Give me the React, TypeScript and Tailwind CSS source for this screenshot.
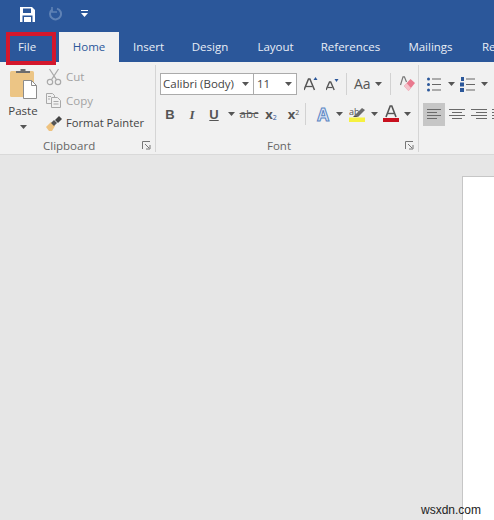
import React from "react";

const Caret = ({ c = "#555" }: { c?: string }) => (
  <svg width="7" height="4" viewBox="0 0 7 4" className="block"><path d="M0 0h7L3.5 4z" fill={c} /></svg>
);

const Launcher = () => (
  <svg width="9" height="9" viewBox="0 0 9 9" className="block">
    <path d="M.5 8V.5H8" fill="none" stroke="#777" />
    <path d="M3 3l4 4M8 4v4H4" fill="none" stroke="#777" />
  </svg>
);

const Tab = ({ label, active, w }: { label: string; active?: boolean; w: string }) => (
  <div className={`${w} h-full flex items-center justify-center shrink-0 ${active ? "bg-[#f1f1f1] text-[#2b579a]" : "text-[#e9eef6]"}`}>{label}</div>
);

const Cell = ({ w, children, className = "" }: { w: string; children?: React.ReactNode; className?: string }) => (
  <div className={`${w} h-full shrink-0 flex items-center justify-center ${className}`}>{children}</div>
);

const Sep = () => <div className="w-px h-[22px] bg-[#d2d2d2] shrink-0" />;

const Lines = ({ pts }: { pts: [number, number][] }) => (
  <svg width="16" height="14" viewBox="0 0 16 14" className="block">
    {pts.map(([a, b], i) => (
      <rect key={i} x={a} y={i * 3 + 1} width={b - a} height="1" fill="#6a6a6a" />
    ))}
  </svg>
);

export default function App() {
  return (
    <div className="relative w-[494px] h-[520px] overflow-hidden bg-[#e6e6e6] font-['Open_Sans','Noto_Sans',sans-serif] text-[11.5px] text-[#444]">
      {/* title bar */}
      <div className="h-[32px] bg-[#2b579a] flex items-center pb-[4px]">
        <Cell w="w-[15px]" />
        <Cell w="w-[24px]">
          <svg width="15" height="15" viewBox="0 0 15 15">
            <path d="M0 0h12l3 3v12H0z" fill="#fff" />
            <rect x="3" y="1.5" width="8" height="4.5" fill="#2b579a" />
            <rect x="2.5" y="8.5" width="10" height="6.5" fill="#2b579a" />
            <rect x="4" y="10" width="7" height="5" fill="#fff" />
          </svg>
        </Cell>
        <Cell w="w-[8px]" />
        <Cell w="w-[18px]">
          <svg width="14" height="14" viewBox="0 0 14 14" fill="none" stroke="#5f82b5" strokeWidth="2">
            <path d="M3.2 2.5A5.5 5.5 0 1 0 8 1.6" />
            <path d="M3 0v5h5" strokeWidth="1.6" />
          </svg>
        </Cell>
        <Cell w="w-[14px]" />
        <Cell w="w-[10px]">
          <svg width="7" height="8" viewBox="0 0 7 8"><rect y="0" width="7" height="1" fill="#fff" /><path d="M0 3h7L3.5 7z" fill="#fff" /></svg>
        </Cell>
      </div>

      {/* tabs */}
      <div className="h-[30px] bg-[#2b579a] flex items-center text-[11.5px]">
        <Tab label="File" w="w-[54px]" />
        <div className="w-[5px] shrink-0" />
        <Tab label="Home" active w="w-[60px]" />
        <Tab label="Insert" w="w-[59px]" />
        <Tab label="Design" w="w-[64px]" />
        <Tab label="Layout" w="w-[67px]" />
        <Tab label="References" w="w-[83px]" />
        <Tab label="Mailings" w="w-[77px]" />
        <div className="pl-[13px] shrink-0 text-[#e9eef6]">Re</div>
      </div>

      {/* ribbon */}
      <div className="h-[92px] bg-[#f1f1f1] border-b border-[#d9d9d9] flex box-content">
        {/* Clipboard */}
        <div className="w-[155px] shrink-0 flex flex-col border-r border-[#d5d5d5] mt-[3px] mb-[2px] box-content">
          <div className="h-[74px] shrink-0 flex">
            <div className="w-[46px] flex flex-col items-center pt-[3px]">
              <svg width="30" height="31" viewBox="0 0 30 31" className="block">
                <rect x="2" y="3" width="24" height="26" rx="1.5" fill="#ecc585" />
                <path d="M8 5V3h4.5V1h5v2H22v2z" fill="#6d6d6d" />
                <path d="M15.5 12.5h8l5 5v13h-13z" fill="#fff" stroke="#8c8c8c" />
                <path d="M23.5 12.5v5h5" fill="none" stroke="#8c8c8c" />
              </svg>
              <div className="leading-[16px] mt-[4px] text-[#444]">Paste</div>
              <div className="mt-[6px]"><Caret /></div>
            </div>
            <div className="flex flex-col">
              <div className="h-[24px] flex items-center text-[#a3a3a3]">
                <svg width="16" height="18" viewBox="0 0 16 18" fill="none" stroke="#a9a9a9" strokeWidth="1.2" className="block mr-[4px]">
                  <circle cx="4" cy="14" r="2.7" /><circle cx="12" cy="14" r="2.7" />
                  <path d="M5.4 11.8L12.5 1M10.6 11.8L3.5 1" />
                </svg>
                Cut
              </div>
              <div className="h-[23px] flex items-center text-[#a3a3a3]">
                <svg width="16" height="15" viewBox="0 0 16 15" fill="none" stroke="#a9a9a9" className="block mr-[4px]">
                  <path d="M.5.5h6l2 2v2M.5.5v10h5" />
                  <path d="M5.5 4.5h6l3 3v7h-9z" />
                  <path d="M2 3.5h3M2 6h2M7.5 8.5h5M7.5 11h5" />
                </svg>
                Copy
              </div>
              <div className="h-[23px] flex items-center text-[#444] text-[11.2px]">
                <svg width="16" height="15" viewBox="0 0 16 15" className="block mr-[4px]">
                  <path d="M0 11l5-5 4 4-3 5H3z" fill="#eec27f" />
                  <path d="M5 7l3-3 3 3-3 3z" fill="#555" />
                  <path d="M9 4l4-4 3 3-4 4z" fill="#444" />
                </svg>
                Format Painter
              </div>
            </div>
          </div>
          <div className="h-[13px] shrink-0 flex items-center justify-between pl-[43px] pr-[4px] text-[#666] leading-none">
            <span>Clipboard</span><Launcher />
          </div>
        </div>

        {/* Font */}
        <div className="w-[258px] shrink-0 flex flex-col border-r border-[#d5d5d5] mt-[3px] mb-[2px] box-content pl-[4px]">
          <div className="h-[74px] shrink-0 flex flex-col pt-[8px]">
            <div className="h-[22px] flex items-center">
              <div className="w-[94px] h-full bg-white border border-[#ababab] flex items-center justify-between pl-[2px] pr-[4px] text-[#444]">
                <span>Calibri (Body)</span><Caret />
              </div>
              <div className="w-[43px] h-full bg-white border border-l-0 border-[#ababab] flex items-center justify-between pl-[3px] pr-[4px] text-[#444]">
                <span>11</span><Caret />
              </div>
              <Cell w="w-[7px]" />
              <Cell w="w-[14px]">
                <svg width="14" height="14" viewBox="0 0 14 14" className="block">
                  <path d="M0 13L4.5 2h1.4L10.5 13" fill="none" stroke="#555" strokeWidth="1.5" />
                  <path d="M2 9.5h6.5" stroke="#555" strokeWidth="1.3" />
                  <path d="M9.5 3l2-3 2 3z" fill="#2b579a" />
                </svg>
              </Cell>
              <Cell w="w-[8px]" />
              <Cell w="w-[13px]">
                <svg width="13" height="13" viewBox="0 0 13 13" className="block">
                  <path d="M0 12L3.5 4h1.2L8.2 12" fill="none" stroke="#555" strokeWidth="1.4" />
                  <path d="M1.5 9.5h5" stroke="#555" strokeWidth="1.2" />
                  <path d="M8.5 1h4l-2 3z" fill="#2b579a" />
                </svg>
              </Cell>
              <Cell w="w-[7px]" />
              <Sep />
              <Cell w="w-[7px]" />
              <span className="text-[14px] leading-none text-[#555]">Aa</span>
              <Cell w="w-[4px]" />
              <Caret />
              <Cell w="w-[8px]" />
              <Sep />
              <Cell w="w-[9px]" />
              <svg width="15" height="16" viewBox="0 0 15 16" className="block">
                <path d="M.5 9L3 .8h1.4L6.5 6" fill="none" stroke="#777" strokeWidth="1.2" />
                <path d="M4 10l6.5-7L15 7l-6.5 8z" fill="#e9798e" />
                <path d="M4 10l4.500 5 2.500-3-4.500-5z" fill="#f5c3cc" />
              </svg>
            </div>
            <div className="h-[22px] mt-[8px] flex items-center">
              <Cell w="w-[4px]" />
              <Cell w="w-[12px]"><span className="font-bold text-[13px] leading-none text-[#555] font-['Liberation_Sans',sans-serif]">B</span></Cell>
              <Cell w="w-[10px]" />
              <Cell w="w-[12px]"><span className="italic font-bold text-[13px] leading-none text-[#555] font-['Liberation_Serif',serif]">I</span></Cell>
              <Cell w="w-[10px]" />
              <Cell w="w-[12px]"><span className="underline font-bold text-[13px] leading-none text-[#555] font-['Liberation_Sans',sans-serif]">U</span></Cell>
              <Cell w="w-[7px]" />
              <Cell w="w-[8px]"><Caret /></Cell>
              <Cell w="w-[5px]" />
              <Cell w="w-[18px]"><span className="line-through text-[11.5px] leading-none text-[#555]">abc</span></Cell>
              <Cell w="w-[6px]" />
              <Cell w="w-[14px]"><span className="font-bold text-[13px] leading-none text-[#555]">x<sub className="text-[7px] text-[#2b579a] font-normal">2</sub></span></Cell>
              <Cell w="w-[8px]" />
              <Cell w="w-[15px]"><span className="font-bold text-[13px] leading-none text-[#555]">x<sup className="text-[7px] text-[#555] font-normal">2</sup></span></Cell>
              <Cell w="w-[4px]" />
              <Sep />
              <Cell w="w-[9px]" />
              <Cell w="w-[16px]"><span className="font-bold text-[17px] leading-none text-[#dbe6f5] [-webkit-text-stroke:1px_#5b86c4]">A</span></Cell>
              <Cell w="w-[4px]" />
              <Cell w="w-[8px]"><Caret /></Cell>
              <Cell w="w-[6px]" />
              <Cell w="w-[17px]">
                <svg width="17" height="18" viewBox="0 0 17 18" className="block">
                  <rect x="0" y="12.500" width="16" height="4.500" fill="#f6f140" />
                  <text x="0" y="10" fontSize="9" fill="#555" fontFamily="Open Sans, sans-serif">ab</text>
                  <path d="M6 10l7-7 3 2-7 7z" fill="#6b6b6b" />
                  <path d="M4 12l2-2 3 2z" fill="#4d4d4d" />
                </svg>
              </Cell>
              <Cell w="w-[4px]" />
              <Cell w="w-[8px]"><Caret /></Cell>
              <Cell w="w-[5px]" />
              <Cell w="w-[16px]">
                <svg width="16" height="18" viewBox="0 0 16 18" className="block">
                  <path d="M3 12L7.200 1h1.600L13 12" fill="none" stroke="#555" strokeWidth="1.6" />
                  <path d="M5 8.500h6" stroke="#555" strokeWidth="1.4" />
                  <rect y="13" width="16" height="4" fill="#c8101e" />
                </svg>
              </Cell>
              <Cell w="w-[4px]" />
              <Cell w="w-[8px]"><Caret /></Cell>
            </div>
          </div>
          <div className="h-[13px] shrink-0 flex items-center justify-between pl-[107px] pr-[4px] text-[#666] leading-none">
            <span>Font</span><Launcher />
          </div>
        </div>

        {/* Paragraph */}
        <div className="flex-1 min-w-0 flex flex-col pl-[4px] pt-[11px] overflow-hidden">
          <div className="h-[22px] flex items-center">
            <Cell w="w-[4px]" />
            <Cell w="w-[14px]">
              <svg width="14" height="15" viewBox="0 0 14 15" className="block">
                <g fill="#2b579a"><circle cx="1.500" cy="2" r="1.500" /><circle cx="1.500" cy="7.500" r="1.500" /><circle cx="1.500" cy="13" r="1.500" /></g>
                <g fill="#666"><rect x="5" y="1.500" width="9" height="1" /><rect x="5" y="7" width="9" height="1" /><rect x="5" y="12.500" width="9" height="1" /></g>
              </svg>
            </Cell>
            <Cell w="w-[6px]" />
            <Cell w="w-[8px]"><Caret /></Cell>
            <Cell w="w-[5px]" />
            <Cell w="w-[15px]">
              <svg width="15" height="15" viewBox="0 0 15 15" className="block">
                <g fill="#2b579a"><rect x="1" y="0" width="3" height="4" /><rect x="0" y="5.500" width="4" height="4" /><rect x="0" y="11" width="4" height="4" /></g>
                <g fill="#666"><rect x="6" y="1.500" width="9" height="1" /><rect x="6" y="7" width="9" height="1" /><rect x="6" y="12.500" width="9" height="1" /></g>
              </svg>
            </Cell>
            <Cell w="w-[5px]" />
            <Cell w="w-[8px]"><Caret /></Cell>
          </div>
          <div className="h-[23px] mt-[8px] flex items-center">
            <Cell w="w-[22px]" className="bg-[#c6c6c6]"><Lines pts={[[1, 15], [1, 11], [1, 15], [1, 11]]} /></Cell>
            <Cell w="w-[4px]" />
            <Cell w="w-[16px]"><Lines pts={[[0, 16], [3, 13], [0, 16], [3, 13]]} /></Cell>
            <Cell w="w-[6px]" />
            <Cell w="w-[16px]"><Lines pts={[[0, 16], [5, 16], [0, 16], [5, 16]]} /></Cell>
            <Cell w="w-[5px]" />
            <Cell w="w-[16px]"><Lines pts={[[0, 16], [0, 16], [0, 16], [0, 16]]} /></Cell>
          </div>
        </div>
      </div>

      {/* document page */}
      <div className="flex justify-end pt-[21px] h-[365px]">
        <div className="w-[32px] h-full bg-white border-l border-t border-[#c6c6c6]" />
      </div>

      {/* File highlight */}
      <div className="absolute left-[6px] top-[32px] w-[50px] h-[33px] border-[4px] border-[#d3172c]" />

      {/* watermark */}
      <div className="absolute left-[421px] top-[503px] text-[12px] leading-[14px] text-[#222] font-['Liberation_Sans',sans-serif]">wsxdn.com</div>
    </div>
  );
}
